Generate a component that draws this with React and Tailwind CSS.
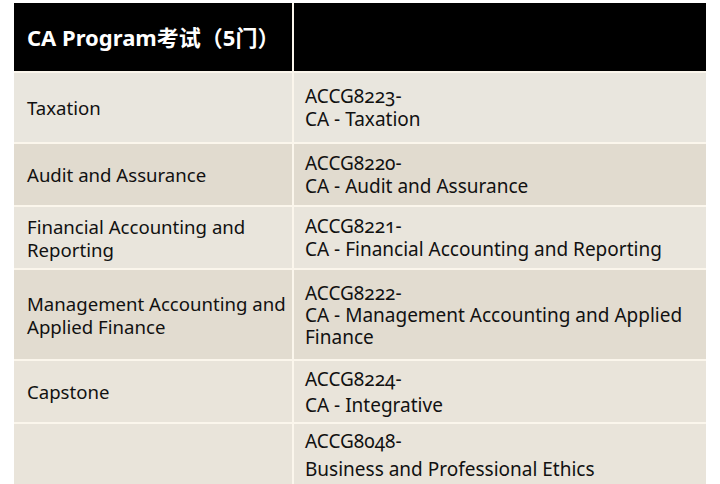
import React from 'react';

const rows = [
  { name: ['Taxation'], code: 'ACCG8223-', title: ['CA - Taxation'], h: 'h-[69px]', bg: 'bg-[#e9e6de]', lead: 'leading-[23px]' },
  { name: ['Audit and Assurance'], code: 'ACCG8220-', title: ['CA - Audit and Assurance'], h: 'h-[61px]', bg: 'bg-[#e1dbcf]', lead: 'leading-[23px]' },
  { name: ['Financial Accounting and', 'Reporting'], code: 'ACCG8221-', title: ['CA - Financial Accounting and Reporting'], h: 'h-[61px]', bg: 'bg-[#e9e5dc]', lead: 'leading-[23px]' },
  { name: ['Management Accounting and', 'Applied Finance'], code: 'ACCG8222-', title: ['CA - Management Accounting and Applied', 'Finance'], h: 'h-[89px]', bg: 'bg-[#e2dcd0]', lead: 'leading-[22px]' },
  { name: ['Capstone'], code: 'ACCG8224-', title: ['CA - Integrative'], h: 'h-[61px]', bg: 'bg-[#e9e4da]', lead: 'leading-[26px]' },
  { name: [], code: 'ACCG8048-', title: ['Business and Professional Ethics'], h: 'h-[62px]', bg: 'bg-[#e9e4da]', lead: 'leading-[28px]' },
];

const Cell = ({ lines, className }) => (
  <div className={`flex flex-col justify-center whitespace-nowrap ${className}`}>
    {lines.map((l, i) => (
      <div key={i}>{l}</div>
    ))}
  </div>
);

const App = () => {
  return (
    <div
      className="w-[720px] h-[484px] overflow-hidden bg-white pt-[3px] pl-[14px] text-[19px] text-[#111] oldstyle-nums"
      style={{ fontFamily: '"Noto Sans", "Noto Sans CJK SC", sans-serif' }}
    >
      <div className="w-[692px] grid grid-cols-[278px_412px] gap-[2px] bg-[#fbf6ec]">
        <div className="h-[68px] bg-black flex items-center pl-[13px] text-white font-bold text-[22px] lining-nums">
          CA Program考试（5门）
        </div>
        <div className="h-[68px] bg-black" />
        {rows.map((r, i) => (
          <React.Fragment key={i}>
            <Cell lines={r.name} className={`${r.h} ${r.bg} pl-[13px] leading-[23px] text-[18.6px]`} />
            <Cell lines={[r.code, ...r.title]} className={`${r.h} ${r.bg} pl-[11px] ${r.lead}`} />
          </React.Fragment>
        ))}
      </div>
    </div>
  );
};

export default App;
